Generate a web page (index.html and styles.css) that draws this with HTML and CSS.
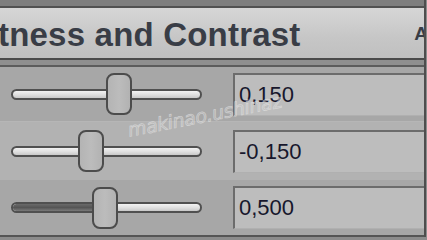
FILE: index.html
```html
<!DOCTYPE html>
<html>
<head>
<meta charset="utf-8">
<link rel="stylesheet" href="styles.css">
</head>
<body>
<div class="panel">
  <div class="topbar"></div>
  <div class="header">
    <span class="title">tness and Contrast</span>
    <span class="corner">A</span>
  </div>
  <div class="sep"></div>
  <div class="rows">
    <div class="row row-dark r1">
      <div class="slider">
        <div class="track"></div>
        <div class="thumb" style="left:95px"></div>
      </div>
      <div class="field">0,150</div>
    </div>
    <div class="row row-light r2">
      <div class="slider">
        <div class="track"></div>
        <div class="thumb" style="left:67px"></div>
      </div>
      <div class="field">-0,150</div>
    </div>
    <div class="row row-dark r3">
      <div class="slider">
        <div class="track"><div class="fill" style="width:86px"></div></div>
        <div class="thumb" style="left:81px"></div>
      </div>
      <div class="field">0,500</div>
    </div>
    <span class="watermark">makinao.ushinaz</span>
  </div>
</div>
</body>
</html>
```
FILE: styles.css
```css
html, body {
  margin: 0;
  padding: 0;
}
body {
  width: 427px;
  height: 240px;
  overflow: hidden;
  background: #8c8c8c;
}
.panel {
  width: 424px;
  border-right: 2px solid #4e4e4e;
  display: flex;
  flex-direction: column;
}
.topbar {
  height: 6px;
  background: #7e7e7e;
  border-bottom: 2px solid #515151;
}
.header {
  height: 50px;
  background: linear-gradient(#d6d6d6, #c6c6c6 60%, #c0c0c0);
  display: flex;
  align-items: center;
  justify-content: space-between;
  overflow: hidden;
  color: #393d46;
  font-family: "Liberation Sans", Arial, sans-serif;
  font-weight: bold;
}
.title {
  font-size: 33px;
  letter-spacing: 0.2px;
  margin-left: -2px;
  padding-top: 4px;
}
.corner {
  font-size: 19px;
  margin-right: -4px;
  padding-top: 2px;
}
.sep {
  height: 5px;
  background: #8f8f8f;
  border-top: 2px solid #4b4b4b;
  border-bottom: 2px solid #5c5c5c;
}
.rows {
  position: relative;
  display: flex;
  flex-direction: column;
  border-bottom: 2px solid #555;
}
.row {
  display: flex;
  align-items: center;
  padding-left: 11px;
  gap: 31px;
}
.r1 { height: 54px; }
.r2 { height: 58px; }
.r3 { height: 55px; }
.row-dark { background: #a7a7a7; }
.row-light { background: #b2b2b2; border-top: 1px solid #b6b6b6; }
.slider {
  position: relative;
  width: 191px;
  height: 42px;
  display: flex;
  align-items: center;
}
.track {
  width: 100%;
  height: 7px;
  border: 2px solid #505050;
  border-radius: 6px;
  background: linear-gradient(#f2f2f2, #dcdcdc 60%, #c8c8c8);
  overflow: hidden;
}
.fill {
  height: 100%;
  background: linear-gradient(#6a6a6a, #555 50%, #7a7a7a);
}
.thumb {
  position: absolute;
  top: 0;
  width: 22px;
  height: 38px;
  border: 2px solid #4c4c4c;
  border-radius: 8px;
  background: linear-gradient(90deg, #b4b4b4, #bcbcbc 50%, #b2b2b2);
}
.field {
  flex: 1;
  height: 40px;
  border-top: 2px solid #6c6c6c;
  border-left: 2px solid #6c6c6c;
  border-bottom: 1px solid #b0b0b0;
  background: #bdbdbd;
  display: flex;
  align-items: center;
  padding-left: 4px;
  font-family: "Liberation Sans", Arial, sans-serif;
  font-size: 22px;
  color: #17172c;
}
.watermark {
  position: absolute;
  left: 128px;
  top: 52px;
  transform: rotate(-11deg);
  transform-origin: left center;
  font-family: "DejaVu Sans", sans-serif;
  font-style: italic;
  font-size: 19px;
  color: rgba(200, 200, 200, 0.35);
  -webkit-text-stroke: 0.7px rgba(235, 235, 235, 0.55);
  letter-spacing: -0.3px;
  pointer-events: none;
}
```
